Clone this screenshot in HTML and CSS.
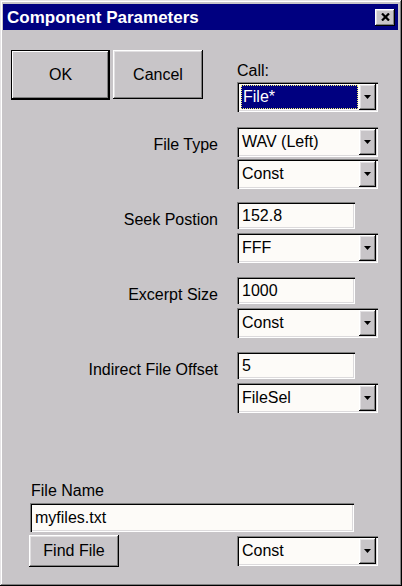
FILE: index.html
```html
<!DOCTYPE html>
<html>
<head>
<meta charset="utf-8">
<link rel="stylesheet" href="styles.css">
</head>
<body>
<div class="window">
  <div class="titlebar">
    <span class="title">Component Parameters</span>
    <button class="close" aria-label="Close">
      <svg width="9" height="8" viewBox="0 0 9 8"><path d="M1 0.5 L8 7.5 M8 0.5 L1 7.5" stroke="#000" stroke-width="2.2" fill="none"/></svg>
    </button>
  </div>
  <div class="body">
    <div class="row top">
      <div class="btns">
        <button class="btn btn-ok">OK</button>
        <button class="btn btn-cancel">Cancel</button>
      </div>
      <div class="call">
        <div class="call-label">Call:</div>
        <div class="select">
          <span class="val sel">File*</span>
          <span class="arrow"><svg width="7" height="4" viewBox="0 0 7 4"><polygon points="0,0 7,0 3.5,4" fill="#000"/></svg></span>
        </div>
      </div>
    </div>

    <div class="row groups">
      <div class="label">File Type</div>
      <div class="controls tight">
        <div class="select"><span class="val">WAV (Left)</span><span class="arrow"><svg width="7" height="4" viewBox="0 0 7 4"><polygon points="0,0 7,0 3.5,4" fill="#000"/></svg></span></div>
        <div class="select"><span class="val">Const</span><span class="arrow"><svg width="7" height="4" viewBox="0 0 7 4"><polygon points="0,0 7,0 3.5,4" fill="#000"/></svg></span></div>
      </div>

      <div class="label">Seek Postion</div>
      <div class="controls">
        <div class="field">152.8</div>
        <div class="select"><span class="val">FFF</span><span class="arrow"><svg width="7" height="4" viewBox="0 0 7 4"><polygon points="0,0 7,0 3.5,4" fill="#000"/></svg></span></div>
      </div>

      <div class="label">Excerpt Size</div>
      <div class="controls">
        <div class="field">1000</div>
        <div class="select"><span class="val">Const</span><span class="arrow"><svg width="7" height="4" viewBox="0 0 7 4"><polygon points="0,0 7,0 3.5,4" fill="#000"/></svg></span></div>
      </div>

      <div class="label">Indirect File Offset</div>
      <div class="controls">
        <div class="field">5</div>
        <div class="select"><span class="val">FileSel</span><span class="arrow"><svg width="7" height="4" viewBox="0 0 7 4"><polygon points="0,0 7,0 3.5,4" fill="#000"/></svg></span></div>
      </div>
    </div>

    <div class="file">
      <div class="file-label">File Name</div>
      <div class="field file-input">myfiles.txt</div>
      <div class="file-row">
        <button class="btn btn-find">Find File</button>
        <div class="select"><span class="val">Const</span><span class="arrow"><svg width="7" height="4" viewBox="0 0 7 4"><polygon points="0,0 7,0 3.5,4" fill="#000"/></svg></span></div>
      </div>
    </div>
  </div>
</div>
</body>
</html>
```
FILE: styles.css
```css
html, body {
  margin: 0;
  padding: 0;
}

body {
  width: 402px;
  height: 586px;
  overflow: hidden;
  background: #c8c5c8;
  font-family: "Liberation Sans", Arial, sans-serif;
  font-size: 16px;
  color: #000;
}

.window {
  box-sizing: border-box;
  width: 402px;
  height: 586px;
  display: flex;
  flex-direction: column;
  padding: 4px 4px 3px 3px;
  background: #c8c5c8;
  box-shadow: inset -1px -1px #000, inset 1px 1px #e6e4e6, inset -2px -2px #808080, inset 2px 2px #fff;
}

.titlebar {
  flex: none;
  height: 26px;
  background: #000080;
  color: #fff;
  display: flex;
  align-items: center;
  justify-content: space-between;
  padding: 0 3px 0 4px;
}

.title {
  font-weight: bold;
  font-size: 17px;
  padding-top: 2px;
  white-space: nowrap;
}

.close {
  box-sizing: border-box;
  width: 20px;
  height: 17px;
  padding: 0;
  border: 0;
  background: #c8c5c8;
  display: flex;
  align-items: center;
  justify-content: center;
  box-shadow: inset -1px -1px #000, inset 1px 1px #fff, inset -2px -2px #808080, inset 2px 2px #e2e0e2;
}

.body {
  flex: 1;
  display: flex;
  flex-direction: column;
  padding: 20px 20px 16px 8px;
}

.row {
  display: grid;
  grid-template-columns: 207px 141px;
  column-gap: 19px;
}

.top {
  align-items: start;
}

.btns {
  display: flex;
  gap: 3px;
}

.btn {
  box-sizing: border-box;
  border: 0;
  padding: 0;
  margin: 0;
  font-family: "Liberation Sans", Arial, sans-serif;
  font-size: 16px;
  color: #000;
  background: #c8c5c8;
  box-shadow: inset -1px -1px #000, inset 1px 1px #fff, inset -2px -2px #808080, inset 2px 2px #e2e0e2;
}

.btn-ok {
  width: 99px;
  height: 50px;
  box-shadow: inset 0 0 0 1px #000, inset -2px -2px #000, inset 2px 2px #fff, inset -3px -3px #808080;
}

.btn-cancel {
  width: 90px;
  height: 49px;
}

.btn-find {
  width: 90px;
  height: 32px;
}

.call {
  padding-top: 12px;
  display: flex;
  flex-direction: column;
  gap: 2px;
}

.call-label {
  line-height: 18px;
}

.groups {
  margin-top: 15px;
  grid-auto-rows: 75px;
}

.label {
  text-align: right;
  white-space: nowrap;
  padding-top: 4px;
  line-height: 28px;
}

.controls {
  display: flex;
  flex-direction: column;
  align-items: flex-start;
  gap: 4px;
}

.controls.tight {
  gap: 2px;
}

.field {
  box-sizing: border-box;
  width: 118px;
  height: 27px;
  padding-left: 5px;
  display: flex;
  align-items: center;
  background: #fdfbf8;
  white-space: nowrap;
  box-shadow: inset 1px 1px #808080, inset 2px 2px #000, inset -1px -1px #fff, inset -2px -2px #dcdadc;
}

.select {
  box-sizing: border-box;
  width: 141px;
  height: 30px;
  padding: 2px;
  display: flex;
  background: #fdfbf8;
  box-shadow: inset 1px 1px #808080, inset 2px 2px #000, inset -1px -1px #fff, inset -2px -2px #dcdadc;
}

.val {
  flex: 1;
  display: flex;
  align-items: center;
  padding-left: 3px;
  white-space: nowrap;
}

.val.sel {
  margin: 1px 1px 1px 2px;
  padding-left: 2px;
  background: #000080;
  color: #fff;
  outline: 1px dotted #f0f070;
  outline-offset: -1px;
}

.arrow {
  width: 17px;
  flex: none;
  display: flex;
  align-items: center;
  justify-content: center;
  background: #c8c5c8;
  box-shadow: inset -1px -1px #000, inset 1px 1px #fff, inset -2px -2px #808080, inset 2px 2px #e2e0e2;
}

.file {
  margin-top: auto;
  margin-left: 18px;
  display: flex;
  flex-direction: column;
}

.file-label {
  line-height: 18px;
  padding-left: 2px;
}

.file-input {
  width: 324px;
  height: 29px;
  margin: 3px 0 0 1px;
}

.file-row {
  display: flex;
  justify-content: space-between;
  align-items: center;
  margin-top: 3px;
}
```
